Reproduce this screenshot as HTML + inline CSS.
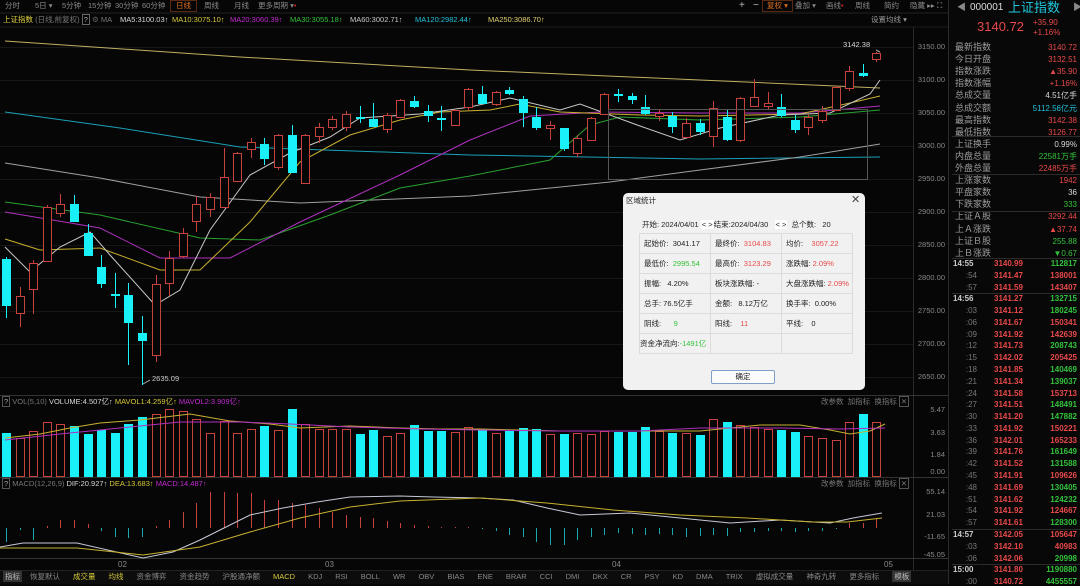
<!DOCTYPE html>
<html><head><meta charset="utf-8"><style>
*{margin:0;padding:0;box-sizing:border-box}
body{width:1080px;height:584px;background:#060606;overflow:hidden;position:relative;font-family:"Liberation Sans","Noto Sans CJK SC",sans-serif;font-size:8px;color:#9a9a9a}
.a{position:absolute;white-space:nowrap;line-height:1}
.r{color:#e8494a}.g{color:#34c23c}.w{color:#d8d8d8}.y{color:#d6c93a}.m{color:#c22bd0}.c{color:#22c0d8}
.tab{position:absolute;top:1px;height:10px;line-height:10px;font-size:7.5px;color:#8a8a8a;white-space:nowrap}
.rp{position:absolute;left:948px;top:0;width:132px;height:584px;background:#080808;border-left:1px solid #2a2a2a}
.lb{position:absolute;left:955px;font-size:9px;color:#9d9d9d;line-height:1;white-space:nowrap;width:60px}
.dlg{position:absolute;left:623px;top:193px;width:242px;height:197px;background:#f1f1f1;border-radius:5px;color:#222;font-size:7.5px}
.dlg table{position:absolute;left:16px;top:40px;border-collapse:collapse}
.dlg td{width:71px;height:20px;border:1px solid #dcdcdc;padding-left:4px;font-size:7.5px;white-space:nowrap}
.bt span{margin-right:13px}
#rr{position:absolute;left:0;top:0;width:1080px;height:584px}
</style></head><body>
<svg id="s" width="1080" height="584" style="position:absolute;left:0;top:0"></svg>

<div class="tab" style="left:5px">分时</div>
<div class="tab" style="left:35px">5日 ▾</div>
<div class="tab" style="left:62px">5分钟</div>
<div class="tab" style="left:88px">15分钟</div>
<div class="tab" style="left:115px">30分钟</div>
<div class="tab" style="left:142px">60分钟</div>
<div class="tab" style="left:170px;top:0;height:12px;padding:0 5px;border:1px solid #5a2a10;color:#e07020;line-height:10px">日线</div>
<div class="tab" style="left:204px">周线</div>
<div class="tab" style="left:234px">月线</div>
<div class="tab" style="left:258px">更多周期 ▾<span style="color:#e02020">•</span></div>
<div class="tab" style="left:739px;color:#bbb;font-size:10px">+</div>
<div class="tab" style="left:753px;color:#bbb;font-size:10px">−</div>
<div class="tab" style="left:762px;top:0;height:12px;padding:0 4px;border:1px solid #5a2a10;color:#e07020">复权 ▾</div>
<div class="tab" style="left:795px">叠加 ▾</div>
<div class="tab" style="left:826px">画线<span style="color:#e02020">•</span></div>
<div class="tab" style="left:855px">周线</div>
<div class="tab" style="left:884px">简约</div>
<div class="tab" style="left:910px">隐藏 ▸▸</div>
<div class="tab" style="left:937px;color:#aaa">⛶</div>

<div class="a" style="left:3px;top:16px;font-size:7.5px"><span style="color:#e0d040">上证指数</span> <span style="color:#777">(日线,前复权)</span> <span style="border:1px solid #666;padding:0 1px;color:#aaa">?</span> <span style="color:#666">⚙</span> <span style="color:#777">MA</span></div>
<div class="a w" style="left:120px;top:16px;font-size:7.5px">MA5:3100.03↑</div>
<div class="a y" style="left:172px;top:16px;font-size:7.5px">MA10:3075.10↑</div>
<div class="a m" style="left:230px;top:16px;font-size:7.5px">MA20:3060.39↑</div>
<div class="a g" style="left:290px;top:16px;font-size:7.5px">MA30:3055.18↑</div>
<div class="a" style="left:350px;top:16px;font-size:7.5px;color:#c8c8c8">MA60:3002.71↑</div>
<div class="a c" style="left:415px;top:16px;font-size:7.5px">MA120:2982.44↑</div>
<div class="a" style="left:488px;top:16px;font-size:7.5px;color:#e0d070">MA250:3086.70↑</div>
<div class="a" style="left:871px;top:16px;font-size:7.5px;color:#999">设置均线 ▾</div>

<div class="a w" style="left:843px;top:41px;font-size:7.5px">3142.38</div>
<div class="a" style="left:152px;top:375px;font-size:7.5px;color:#ccc">2635.09</div>

<div id="ax"></div>

<div class="a" style="left:2px;top:398px;font-size:7.5px"><span style="border:1px solid #555;padding:0 1px;color:#aaa">?</span> <span style="color:#777">VOL(5,10)</span> <span class="w">VOLUME:4.507亿↑</span> <span class="y">MAVOL1:4.259亿↑</span> <span class="m">MAVOL2:3.909亿↑</span></div>
<div class="a" style="left:821px;top:398px;font-size:7.5px;color:#777">改参数 &nbsp;加指标 &nbsp;换指标 <span style="border:1px solid #555;padding:0 1px">✕</span></div>
<div class="a" style="left:2px;top:480px;font-size:7.5px"><span style="border:1px solid #555;padding:0 1px;color:#aaa">?</span> <span style="color:#777">MACD(12,26,9)</span> <span class="w">DIF:20.927↑</span> <span class="y">DEA:13.683↑</span> <span class="m">MACD:14.487↑</span></div>
<div class="a" style="left:821px;top:480px;font-size:7.5px;color:#777">改参数 &nbsp;加指标 &nbsp;换指标 <span style="border:1px solid #555;padding:0 1px">✕</span></div>

<div class="a" style="left:118px;top:561px;color:#888">02</div>
<div class="a" style="left:325px;top:561px;color:#888">03</div>
<div class="a" style="left:612px;top:561px;color:#888">04</div>
<div class="a" style="left:884px;top:561px;color:#888">05</div>

<div style="position:absolute;left:0;top:570px;width:948px;height:14px;background:#0c0c0c;border-top:1px solid #222"></div>
<div class="a bt" style="left:3px;top:573px;font-size:7.5px;color:#888"><span style="background:#333;padding:1px 2px;color:#bbb;margin-right:8px">指标</span><span>恢复默认</span><span class="y">成交量</span><span class="y">均线</span><span>资金博弈</span><span>资金趋势</span><span>沪股通净额</span><span class="y">MACD</span><span>KDJ</span><span>RSI</span><span>BOLL</span><span>WR</span><span>OBV</span><span>BIAS</span><span>ENE</span><span>BRAR</span><span>CCI</span><span>DMI</span><span>DKX</span><span>CR</span><span>PSY</span><span>KD</span><span>DMA</span><span>TRIX</span><span>虚拟成交量</span><span>神奇九转</span><span>更多指标</span><span style="background:#333;padding:1px 2px;color:#bbb">模板</span></div>

<div class="rp"></div>
<div class="a" style="left:957px;top:3px;font-size:9px;color:#888">◀</div>
<div class="a" style="left:970px;top:3px;font-size:10px;color:#ddd">000001</div>
<div class="a" style="left:1008px;top:1px;font-size:13px;color:#20c8e0">上证指数</div>
<div class="a" style="left:1073px;top:3px;font-size:9px;color:#888">▶</div>
<div class="a r" style="left:977px;top:20px;font-size:13px">3140.72</div>
<div class="a r" style="left:1033px;top:19px;font-size:8px">+35.90</div>
<div class="a r" style="left:1033px;top:29px;font-size:8px">+1.16%</div>

<div style="position:absolute;left:608px;top:109px;width:260px;height:71px;border:1px solid #555"></div>

<div class="dlg">
<div class="a" style="left:3px;top:4px">区域统计</div>
<div class="a" style="left:228px;top:2px;font-size:11px;color:#444">✕</div>
<div class="a" style="left:19px;top:28px">开始: 2024/04/01 <span style="background:#fff;padding:0 1px">&lt; &gt;</span>结束:2024/04/30 &nbsp;&nbsp;<span style="background:#fff;padding:0 1px">&lt; &gt;</span>&nbsp; 总个数: &nbsp;&nbsp;20</div>
<table>
<tr><td>起始价: &nbsp;3041.17</td><td>最终价: &nbsp;<span class="r">3104.83</span></td><td>均价: &nbsp;&nbsp;&nbsp;<span class="r">3057.22</span></td></tr>
<tr><td>最低价: &nbsp;<span class="g">2995.54</span></td><td>最高价: &nbsp;<span class="r">3123.29</span></td><td>涨跌幅: <span class="r">2.09%</span></td></tr>
<tr><td>振幅: &nbsp;&nbsp;4.20%</td><td>板块涨跌幅: -</td><td>大盘涨跌幅: <span class="r">2.09%</span></td></tr>
<tr><td>总手: 76.5亿手</td><td>金额: &nbsp;&nbsp;8.12万亿</td><td>换手率: &nbsp;0.00%</td></tr>
<tr><td>阴线: &nbsp;&nbsp;&nbsp;&nbsp;&nbsp;<span class="g">9</span></td><td>阳线: &nbsp;&nbsp;&nbsp;<span class="r">11</span></td><td>平线: &nbsp;&nbsp;&nbsp;0</td></tr>
<tr><td style="padding-left:0">资金净流向:<span class="g">-1491亿</span></td><td></td><td></td></tr>
</table>
<div style="position:absolute;left:88px;top:177px;width:64px;height:14px;background:#fbfbfb;border:1px solid #7fa0c8;border-radius:2px;text-align:center;line-height:12px">确定</div>
</div>

<script>
var s=document.getElementById('s'),h='';
function L(x1,y1,x2,y2,c,w){h+='<line x1="'+x1+'" y1="'+y1+'" x2="'+x2+'" y2="'+y2+'" stroke="'+c+'" stroke-width="'+(w||1)+'"/>';}
function R(x,y,w,hh,f,st){h+='<rect x="'+x+'" y="'+y+'" width="'+w+'" height="'+hh+'" fill="'+f+'"'+(st?' stroke="'+st+'" stroke-width="1"':'')+'/>';}
function P(pts,c){h+='<polyline fill="none" stroke="'+c+'" stroke-width="1" points="'+pts+'"/>';}
L(0,13,948,13,'#222');L(0,27,948,27,'#1c1c1c');
L(913.5,27,913.5,570,'#2a2a2a');
L(0,395.5,948,395.5,'#333');L(0,477.5,948,477.5,'#333');L(0,558.5,948,558.5,'#333');
var ys=[47,80,113,146,179,212,245,278,311,344,377];
ys.forEach(function(y){L(0,y+.5,913,y+.5,'#161616');});
P('5,41 240,57 470,70 700,80 880,88','#bfb060');
P('5,112 120,128 240,147 470,155 700,159 880,157','#1aa0b8');
P('5,163 100,178 200,197 300,203 470,196 610,182 700,170 800,157 880,144','#a0a0a0');
P('5,202 100,215 200,238 260,240 330,215 400,188 470,176 550,160 590,125 620,117 700,120 800,117 880,110','#2aa030');
P('5,212 100,228 160,258 230,258 300,222 400,175 470,140 530,116 600,112 700,113 800,113 880,106','#b030c0');
P('5,239 40,250 100,248 160,270 200,270 250,222 300,162 350,135 400,120 440,112 490,110 520,104 560,112 640,115 700,116 800,114 850,103 880,96','#c8b030');
P('5,247 30,272 60,247 90,232 110,255 155,305 180,290 210,230 250,175 290,153 330,137 360,118 420,114 470,107 510,98 560,110 580,104 640,126 680,140 720,128 780,115 830,113 870,94 880,80','#c8c8c8');
var C=[[259,306,257,318,0],[296,313,287,327,1],[263,289,260,314,1],[207,261,205,262,1],[204,213,194,217,1],[204,222,195,222,0],[233,256,224,256,0],[267,284,255,288,0],[294,296,273,308,0],[295,323,283,365,0],[333,341,316,385,0],[284,355,275,362,1],[258,283,251,296,1],[233,256,228,258,1],[204,221,196,232,1],[197,209,193,217,1],[177,207,148,207,1],[153,181,152,182,1],[142,149,138,158,1],[144,159,138,165,0],[135,167,134,170,1],[135,173,125,173,0],[135,183,134,184,1],[127,136,123,143,1],[119,127,116,130,1],[114,127,111,131,1],[117,119,106,123,0],[119,127,103,127,0],[115,129,113,133,1],[100,117,99,118,1],[101,107,96,108,0],[111,116,105,122,0],[118,120,106,131,0],[110,125,109,126,1],[89,107,88,110,1],[94,104,86,104,0],[92,104,91,106,1],[90,94,87,95,0],[99,113,96,127,0],[117,128,107,130,0],[125,128,121,140,1],[128,149,128,151,0],[138,153,135,157,1],[118,140,117,141,1],[94,114,93,115,1],[94,96,89,102,0],[96,100,93,104,0],[107,114,95,115,0],[113,116,110,121,1],[116,127,112,133,0],[123,137,118,138,1],[123,132,119,135,0],[108,136,101,147,1],[117,140,110,141,0],[98,140,97,142,1],[97,106,79,107,1],[103,106,92,110,1],[107,116,94,117,0],[120,130,115,133,0],[117,127,114,135,1],[111,120,106,123,1],[87,110,86,111,1],[71,88,66,91,1],[73,76,64,77,0],[53,59,52,62,1]];
var V=[433,438,431,422,424,426,434,430,433,424,417,414,409,411,419,433,421,433,429,426,430,409,424,429,429,429,434,430,436,433,425,431,431,432,427,429,433,431,428,429,434,434,433,434,431,432,432,427,431,433,433,435,419,422,425,427,429,430,432,436,438,440,422,414,422];
var M=[-14,-2,-12,2,8,8,4,-3,-9,-10,-9,2,8,16,25,36,36,35,35,28,28,25,23,20,16,13,11,10,7,5,3,2,1,1,1,-1,-3,-7,-9,-14,-17,-17,-12,-9,-7,-5,-6,-7,-6,-7,-9,-8,-7,-8,-4,-4,-3,-3,-4,-3,-3,-1,5,5,9];
var RED='#c8423e',CY='#19f0f8';
C.forEach(function(c,i){var x=Math.round(6+i*13.6);var col=c[4]?RED:CY;
 L(x+.5,c[2],x+.5,c[0],col);L(x+.5,c[1],x+.5,c[3],col);
 var hh=Math.max(1,c[1]-c[0]);
 if(c[4])R(x-3.5,c[0]+.5,8,hh,'#060606',RED);else R(x-4,c[0],9,hh,CY);
 var vt=V[i];if(c[4])R(x-3.5,vt+.5,8,476-vt,'none',RED);else R(x-4,vt,9,477-vt,CY);
 var m=M[i];if(m>0)L(x+.5,528-m,x+.5,528,'#c8423e');else L(x+.5,528,x+.5,528-m,'#1aa8b0');
});
L(880,52,876,50,'#aaa');L(150,380,143,384,'#aaa');
P('5,438 40,434 70,428 100,423 140,420 190,414 230,421 270,424 300,428 350,426 400,428 440,429 480,429 560,431 620,431 700,431 760,425 800,425 830,430 850,434 870,431 885,424','#c8b030');
P('5,440 60,434 120,428 180,422 240,422 290,424 350,427 420,429 480,430 560,431 640,431 700,428 780,428 840,429 885,428','#b030c0');
P('0,547 23,543 77,543 143,558 173,552 200,540 250,515 283,508 317,502 350,497 400,496 433,497 480,498 513,500 547,508 580,515 630,513 680,518 730,523 780,520 830,523 853,518 882,513','#c8c8d8');
P('0,548 77,548 143,555 200,547 250,532 300,518 350,507 400,501 480,498 547,503 613,510 680,515 747,518 813,522 847,522 882,518','#c8b030');
s.innerHTML=h;
var ax='',pl=['3150.00','3100.00','3050.00','3000.00','2950.00','2900.00','2850.00','2800.00','2750.00','2700.00','2650.00'];
pl.forEach(function(t,i){ax+='<div class="a" style="left:914px;width:31px;text-align:right;top:'+(ys[i]-4)+'px;color:#888;font-size:7.5px">'+t+'</div>';});
[['5.47',410],['3.63',433],['1.84',455],['0.00',472],['55.14',492],['21.03',515],['-11.65',537],['-45.05',555]].forEach(function(a){ax+='<div class="a" style="left:914px;width:31px;text-align:right;top:'+(a[1]-4)+'px;color:#888;font-size:7.5px">'+a[0]+'</div>';});
document.getElementById('ax').innerHTML=ax;
</script>
<div id="rr"></div>
<script>
var rows=[['最新指数','3140.72','r'],['今日开盘','3132.51','r'],['指数涨跌','▲35.90','r'],['指数涨幅','+1.16%','r'],['总成交量','4.51亿手','w'],['总成交额','5112.56亿元','c'],['最高指数','3142.38','r'],['最低指数','3126.77','r'],['上证换手','0.99%','w'],['内盘总量','22581万手','g'],['外盘总量','22485万手','r'],['上涨家数','1942','r'],['平盘家数','36','w'],['下跌家数','333','g'],['上证Ａ股','3292.44','r'],['上Ａ涨跌','▲37.74','r'],['上证Ｂ股','255.88','g'],['上Ｂ涨跌','▼0.67','g']];
var o='';rows.forEach(function(r,i){var y=43+i*12.1;o+='<div class="lb" style="top:'+y+'px">'+r[0]+'</div><div class="a '+r[2]+'" style="left:1000px;width:77px;text-align:right;top:'+(y+1)+'px;font-size:8px">'+r[1]+'</div>';});
[136,174,211,258].forEach(function(y){o+='<div style="position:absolute;left:952px;width:128px;top:'+y+'px;height:1px;background:#2c2c2c"></div>';});
var t=[['14:55','3140.99','112817','g'],[':54','3141.47','138001','r'],[':57','3141.59','143407','r'],['14:56','3141.27','132715','g'],[':03','3141.12','180245','g'],[':06','3141.67','150341','r'],[':09','3141.92','142639','r'],[':12','3141.73','208743','g'],[':15','3142.02','205425','r'],[':18','3141.85','140469','g'],[':21','3141.34','139037','g'],[':24','3141.58','153713','r'],[':27','3141.51','148491','g'],[':30','3141.20','147882','g'],[':33','3141.92','150221','r'],[':36','3142.01','165233','r'],[':39','3141.76','161649','g'],[':42','3141.52','131588','g'],[':45','3141.91','109626','r'],[':48','3141.69','130405','g'],[':51','3141.62','124232','g'],[':54','3141.92','124667','r'],[':57','3141.61','128300','g'],['14:57','3142.05','105647','r'],[':03','3142.10','40983','r'],[':06','3142.06','20998','g'],['15:00','3141.80','1190880','g'],[':00','3140.72','4455557','g']];
t.forEach(function(r,i){var y=260+i*11.78;var big=r[0].length>3;
o+='<div class="a" style="left:953px;width:24px;text-align:'+(big?'left':'right')+';top:'+y+'px;font-size:8px;font-weight:'+(big?'bold':'normal')+';color:'+(big?'#ccc':'#777')+'">'+r[0]+'</div>';
o+='<div class="a r" style="left:994px;top:'+y+'px;font-size:8px;font-weight:bold">'+r[1]+'</div>';
o+='<div class="a '+r[3]+'" style="left:1030px;width:47px;text-align:right;top:'+y+'px;font-size:8px;font-weight:bold">'+r[2]+'</div>';
if(big&&i>0)o+='<div style="position:absolute;left:952px;width:128px;top:'+(y-2)+'px;height:1px;background:#2c2c2c"></div>';});
document.getElementById('rr').innerHTML=o;
</script>
</body></html>
